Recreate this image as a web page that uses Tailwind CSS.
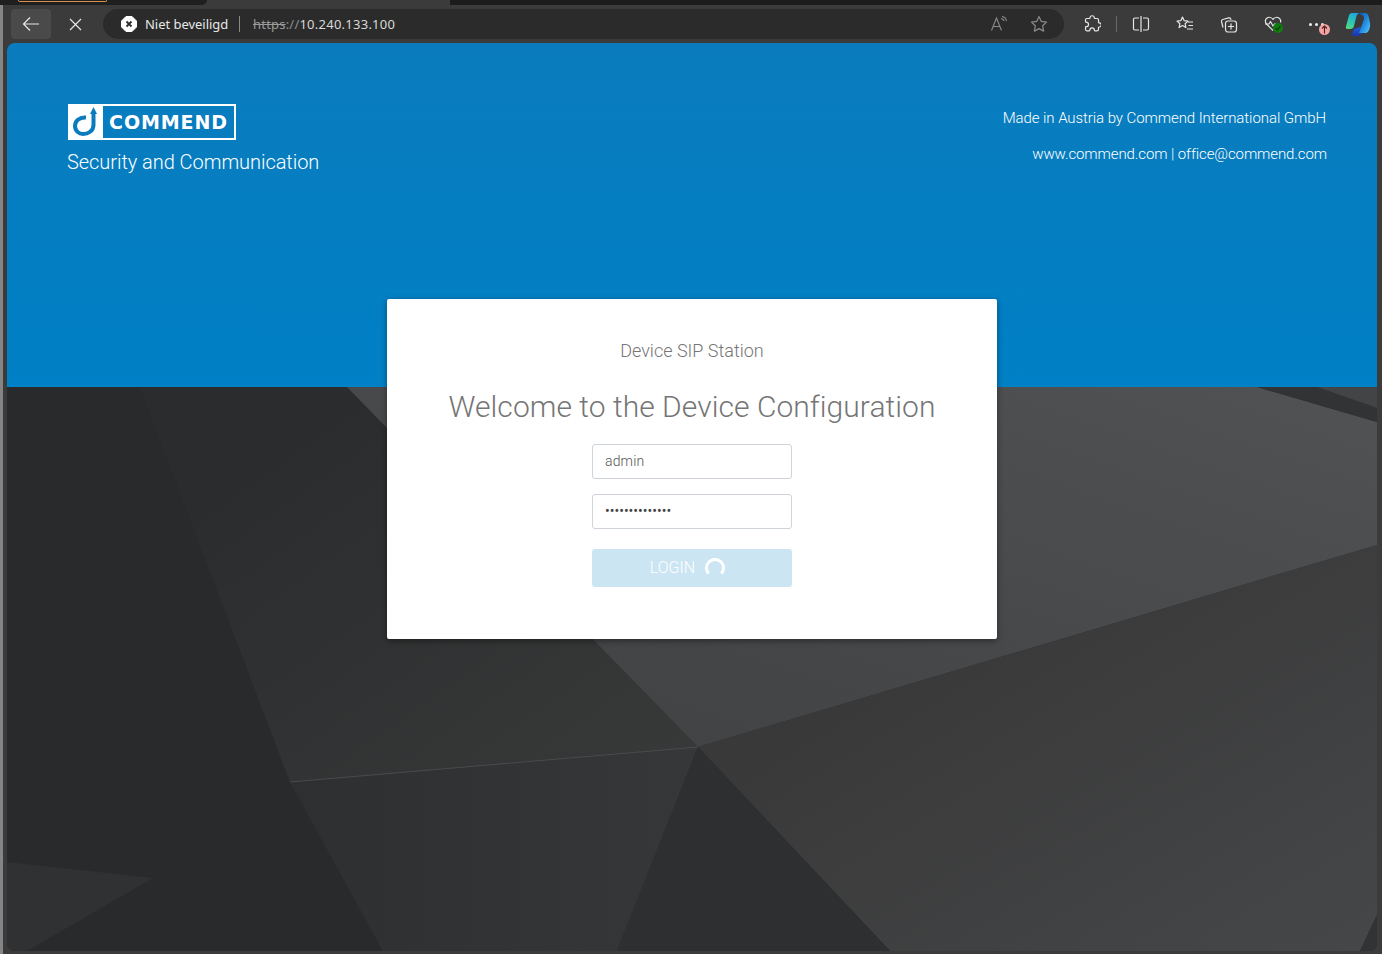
<!doctype html>
<html lang="en">
<head>
  <meta charset="UTF-8">
  <meta name="viewport" content="width=device-width, initial-scale=1.0">
  <title>Commend Device Configuration</title>
  <script src="https://cdn.jsdelivr.net/npm/@tailwindcss/browser@4"></script>
</head>
<body class="bg-[#3b3b3b] overflow-hidden">
  <div class="relative w-[1382px] h-[954px] flex flex-col">

    <!-- tab strip remains -->
    <div class="h-[5px] flex shrink-0">
      <div class="w-[207px] bg-[#1f1f1f] rounded-br-lg relative">
        <div class="absolute left-[18px] top-0 w-[89px] h-[2px] bg-[#1f1f1f] border-b border-x border-[#d98f4e] rounded-b-sm"></div>
      </div>
      <div class="w-[243px]"></div>
      <div class="flex-1 bg-[#1c1c1c]"></div>
    </div>

    <!-- browser toolbar -->
    <div class="h-[38px] shrink-0 flex items-center pl-[11px] font-['Noto_Sans',sans-serif]">
      <div class="w-[40px] h-[30px] rounded bg-[#4a4a4a] flex items-center justify-center">
        <svg width="18" height="16" viewBox="0 0 18 16" fill="none" stroke="#e6e6e6" stroke-width="1.2"><path d="M1.5 8H17M8 1.5 1.5 8 8 14.5"/></svg>
      </div>
      <div class="w-[48px] flex justify-center">
        <svg width="13" height="13" viewBox="0 0 13 13" fill="none" stroke="#e6e6e6" stroke-width="1.2"><path d="M1 1l11 11M12 1 1 12"/></svg>
      </div>
      <div class="w-[961px] ml-[4px] h-[30px] rounded-full bg-[#2b2b2b] flex items-center pl-[18px] pr-[16px]">
        <svg width="16" height="16" viewBox="0 0 16 16"><path d="M5 .5h6L15.500 5v6L11 15.500H5L.5 11V5z" fill="#fff" stroke="#fff" stroke-linejoin="round"/><path d="M5.500 5.500l5 5M10.500 5.500l-5 5" stroke="#2b2b2b" stroke-width="1.800"/></svg>
        <span class="ml-[8px] text-[13px] leading-none text-[#e8e8e8] w-[94px] whitespace-nowrap tracking-[-0.03px]">Niet beveiligd</span>
        <span class="w-px h-[16px] bg-[#8a8a8a]"></span>
        <span class="ml-[13px] text-[13px] leading-none text-[#9a9a9a] line-through tracking-[0.2px]">https</span><span class="text-[13px] leading-none text-[#8f8f8f] tracking-[0.2px]">://</span><span class="text-[13px] leading-none text-[#d8d8d8] tracking-[0.25px]">10.240.133.100</span>
        <svg class="ml-auto" width="18" height="18" viewBox="0 0 18 18" fill="none" stroke="#8a8a8a" stroke-width="1.100"><path d="M1.500 15.500 6.500 3l5 12.500M3.200 11.500h6.600M11 3.500a3.500 3.500 0 0 1 3 2.500M12 1.500a5.500 5.500 0 0 1 4.500 4.500"/></svg>
        <svg class="ml-[22px]" width="18" height="18" viewBox="0 0 18 18" fill="none" stroke="#8a8a8a" stroke-width="1.200" stroke-linejoin="round"><path d="M9 1.500l2.300 4.900 5.200.7-3.800 3.700.9 5.300L9 13.600l-4.600 2.500.9-5.300L1.500 7.100l5.200-.7z"/></svg>
      </div>
      <svg class="ml-[19px]" width="18" height="18" viewBox="0 0 18 18" fill="none" stroke="#e6e6e6" stroke-width="1.200" stroke-linejoin="round"><path d="M7 2.500a2.200 2.200 0 0 1 4.300 0c0 .6 0 1 .5 1h2.400c.7 0 1.300.6 1.300 1.300v2.400c0 .5.300.6.700.6a2.100 2.100 0 0 1 0 4.200c-.4 0-.7.100-.7.600v1.600c0 .9-.7 1.600-1.600 1.600h-2c-.5 0-.6-.3-.6-.7a2.200 2.200 0 0 0-4.400 0c0 .4-.1.700-.6.700H4c-.8 0-1.500-.7-1.500-1.500v-2c0-.5.300-.6.700-.6a2.300 2.300 0 0 0 0-4.600c-.4 0-.7-.100-.7-.6V4.800c0-.7.600-1.300 1.300-1.300H6.500c.4 0 .5-.4.500-1z"/></svg>
      <span class="ml-[15px] w-px h-[16px] bg-[#6a6a6a]"></span>
      <svg class="ml-[15px]" width="18" height="18" viewBox="0 0 18 18" fill="none" stroke="#e6e6e6" stroke-width="1.200"><path d="M7 3H3a1.500 1.500 0 0 0-1.500 1.500v9A1.500 1.500 0 0 0 3 15h4M11 3h4a1.500 1.500 0 0 1 1.500 1.500v9A1.500 1.500 0 0 1 15 15h-4M9 1v16"/></svg>
      <svg class="ml-[26px]" width="18" height="18" viewBox="0 0 18 18" fill="none" stroke="#e6e6e6" stroke-width="1.200" stroke-linejoin="round"><path d="M6.500 2l1.700 3.700 3.800.4-2.900 2.600.8 3.900-3.400-2-3.400 2 .8-3.900L1 6.100l3.800-.4zM12 7h5M12.500 10.500H17M11 14h6"/></svg>
      <svg class="ml-[26px]" width="18" height="18" viewBox="0 0 18 18" fill="none" stroke="#e6e6e6" stroke-width="1.200" stroke-linejoin="round"><path d="M3 12.500 1.500 6.500c-.2-1 .3-1.800 1.200-2l6-1.600c.9-.2 1.700.2 2 1l.3 1"/><rect x="5.500" y="6" width="11" height="11" rx="2.500"/><path d="M11 8.500v6M8 11.500h6"/></svg>
      <div class="ml-[26px] relative w-[18px] h-[18px]">
        <svg width="18" height="18" viewBox="0 0 18 18" fill="none" stroke="#e6e6e6" stroke-width="1.200" stroke-linejoin="round"><path d="M9 15.500 2.500 9C.8 7 1 4.500 2.800 3.200 4.800 1.800 7.500 2.300 9 4.300c1.500-2 4.200-2.500 6.200-1.100C16.500 4.200 17 5.800 16.500 7.500"/><path d="M1 9h4l1.500-2.500L9 11l1.500-2H12"/></svg>
        <span class="absolute left-[9px] top-[8px] w-[10px] h-[10px] rounded-full bg-[#107c10] flex items-center justify-center">
          <svg width="8" height="8" viewBox="0 0 8 8" fill="none" stroke="#0b3d0b" stroke-width="1.200"><path d="M1.500 4.200 3.200 6l3.300-3.800"/></svg>
        </span>
      </div>
      <div class="ml-[27px] relative w-[22px] h-[18px] flex items-center gap-[3px]">
        <span class="w-[3px] h-[3px] rounded-full bg-[#f0f0f0]"></span><span class="w-[3px] h-[3px] rounded-full bg-[#f0f0f0]"></span><span class="w-[3px] h-[3px] rounded-full bg-[#f0f0f0]"></span>
        <span class="absolute left-[10px] top-[9px] w-[11px] h-[11px] rounded-full bg-[#f4a3a3] flex items-center justify-center">
          <svg width="9" height="9" viewBox="0 0 9 9" fill="none" stroke="#4a1f1f" stroke-width="1.100"><path d="M4.500 8.500V1M2 3.500 4.500 1 7 3.500"/></svg>
        </span>
      </div>
      <!-- copilot -->
      <svg class="ml-[14px]" width="26" height="26" viewBox="0 0 26 26">
        <defs>
          <linearGradient id="copA" x1="0.7" y1="0" x2="0.2" y2="1"><stop offset="0" stop-color="#1fa3e0"/><stop offset="0.6" stop-color="#2fc9b0"/><stop offset="1" stop-color="#58d97a"/></linearGradient>
          <linearGradient id="copB" x1="0" y1="0" x2="0" y2="1"><stop offset="0" stop-color="#1f5fd8"/><stop offset="1" stop-color="#1a35a8"/></linearGradient>
          <linearGradient id="copC" x1="0" y1="0" x2="1" y2="0.8"><stop offset="0" stop-color="#0f4fa8"/><stop offset="0.55" stop-color="#1f86dc"/><stop offset="1" stop-color="#4bbdf5"/></linearGradient>
        </defs>
        <path d="M9 18 15 16l3 3c-1 4-3 6-5 6H8c-1.500 0-2-1-1-2z" fill="url(#copB)"/>
        <path d="M13 3c1-1 2-1 4-1h3c2 0 3 1.500 3.500 3L25 12c.5 3-.5 9-4 10h-7l5-14c.5-2.500-2-5-6-5z" fill="url(#copC)"/>
        <path d="M7 2h7c-2 1-2.500 3-3 5L9 15c-.5 2-1.500 3-4 3H2.500C1 18 .6 17 1 15.500L3.800 5C4.300 3 5.500 2 7 2z" fill="url(#copA)"/>
      </svg>
    </div>

    <!-- page -->
    <div class="flex-1 flex flex-col ml-[7px] mr-[5px] mb-[3px] rounded-lg overflow-hidden font-['Roboto',sans-serif]">
      <header class="h-[344px] shrink-0 bg-gradient-to-b from-[#0a7cbd] to-[#0080c6] flex justify-between pt-[61px] pl-[60px] pr-[51px] text-white font-light">
        <div>
          <div class="ml-[1px] w-[168px] h-[36px] border-2 border-white flex">
            <div class="w-[33px] bg-white shrink-0">
              <svg class="-ml-[2px] -mt-[2px]" width="36" height="36" viewBox="0 0 36 36" fill="none"><path d="M18 13.500C11 13 7 17 7 22c0 5 4 8 8 8 5 0 10.500-3 10.500-9V9" stroke="#0a7cbd" stroke-width="4"/><path d="M25.500 3l-3.500 7h7z" fill="#0a7cbd"/></svg>
            </div>
            <div class="flex-1 flex items-center justify-center font-['DejaVu_Sans',sans-serif] font-bold text-[19px] leading-none tracking-[0.9px]">COMMEND</div>
          </div>
          <p class="mt-[9px] text-[20px] leading-[26px] tracking-[-0.05px]">Security and Communication</p>
        </div>
        <div class="text-right text-[15px] leading-[22px] pt-[3px] tracking-[-0.07px]">
          <p>Made in Austria by Commend International GmbH</p>
          <p class="mt-[14px] -mr-[1px] tracking-[-0.1px]">www.commend.com | office@commend.com</p>
        </div>
      </header>

      <!-- polygon backdrop, coordinates are page pixels -->
      <svg class="flex-1 block w-full" viewBox="7 387 1370 564" preserveAspectRatio="none">
        <defs>
          <linearGradient id="bgLight" x1="0" y1="1" x2="1" y2="0"><stop offset="0" stop-color="#3f4041"/><stop offset="1" stop-color="#515253"/></linearGradient>
          <linearGradient id="bgLower" x1="0" y1="0" x2="1" y2="1"><stop offset="0.3" stop-color="#39393a"/><stop offset="1" stop-color="#464748"/></linearGradient>
          <linearGradient id="bgMid" x1="0" y1="0" x2="1" y2="1"><stop offset="0.2" stop-color="#2b2c2d"/><stop offset="1" stop-color="#383939"/></linearGradient>
          <linearGradient id="bgBottom" x1="0" y1="0" x2="1" y2="0"><stop offset="0" stop-color="#2e2f30"/><stop offset="1" stop-color="#363738"/></linearGradient>
        </defs>
        <rect x="7" y="387" width="1370" height="564" fill="#292a2b"/>
        <polygon points="140,387 347,387 698,747 290,782" fill="url(#bgMid)"/>
        <polygon points="347,387 1257,387 1377,422 1377,545 698,747" fill="url(#bgLight)"/>
        <polygon points="1257,387 1317,387 1377,408 1377,422" fill="#323334"/>
        <polygon points="1317,387 1377,387 1377,408" fill="#434445"/>
        <polygon points="698,747 1377,545 1377,915 1360,951 890,951" fill="url(#bgLower)"/>
        <polygon points="1377,915 1377,951 1360,951" fill="#323334"/>
        <polygon points="290,782 698,747 617,951 383,951" fill="url(#bgBottom)"/>
        <polygon points="698,747 890,951 617,951" fill="#2e2f30"/>
        <polygon points="7,862 153,878 27,951 7,951" fill="#303132"/>
        <line x1="290" y1="782" x2="698" y2="747" stroke="#4a4b4e" stroke-width="1"/>
      </svg>
    </div>

    <!-- login card sits over the header/backdrop seam -->
    <div class="absolute left-[387px] top-[299px] w-[610px] h-[340px] bg-white rounded-[2px] shadow-[0_2px_6px_rgba(0,0,0,0.4)] flex flex-col items-center font-['Roboto',sans-serif] font-light">
      <p class="mt-[40px] text-[18px] leading-[24px] text-[#757575]">Device SIP Station</p>
      <h1 class="mt-[22px] text-[30px] leading-[44px] text-[#757575] whitespace-nowrap tracking-[0.05px]">Welcome to the Device Configuration</h1>
      <input class="mt-[15px] w-[200px] h-[35px] px-[12px] pb-[2px] border border-[#ced4da] rounded-[3px] text-[14px] tracking-[0.15px] text-[#555] bg-white" type="text" value="admin">
      <input class="mt-[15px] w-[200px] h-[35px] px-[12px] pb-[2px] border border-[#ced4da] rounded-[3px] text-[14px] text-[#444] font-normal bg-white" type="password" value="12345678901234">
      <button class="mt-[20px] w-[200px] h-[38px] bg-[#cce5f3] rounded-[3px] flex items-center justify-center gap-[10px] text-white text-[16px]" disabled>
        LOGIN
        <svg class="mr-[9px]" width="20" height="20" viewBox="0 0 20 20" fill="none" stroke="#ffffff" stroke-width="3"><path d="M3.600 15.500A8.500 8.500 0 1 1 16.400 15.500"/></svg>
      </button>
    </div>

    <!-- window edge -->
    <div class="absolute left-0 top-[5px] bottom-0 w-[3px] bg-[#858585]"></div>
  </div>
</body>
</html>
